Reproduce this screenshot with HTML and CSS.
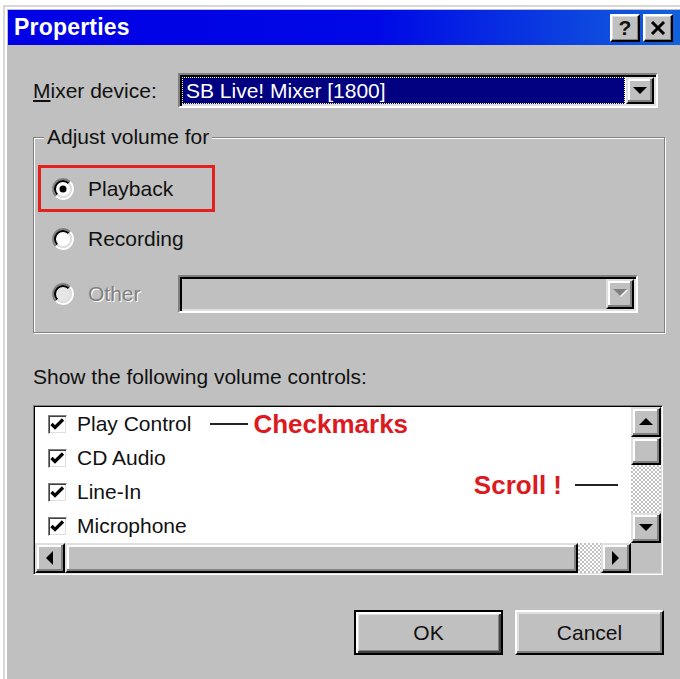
FILE: index.html
```html
<!DOCTYPE html>
<html lang="en">
<head>
<meta charset="utf-8">
<title>Properties</title>
<link rel="stylesheet" href="styles.css">
</head>
<body>
<div class="dialog">
  <div class="titlebar">
    <span class="title">Properties</span>
    <div class="caption-btns">
      <span class="cap-btn">?</span>
      <span class="cap-btn">
        <svg width="16" height="14" viewBox="0 0 16 14"><path d="M2 1 L14 13 M14 1 L2 13" stroke="#000" stroke-width="3" fill="none"/></svg>
      </span>
    </div>
  </div>

  <div class="content">
    <div class="mixer-row">
      <span class="label"><u>M</u>ixer device:</span>
      <div class="combo">
        <div class="combo-value selected">SB Live! Mixer [1800]</div>
        <span class="drop raised">
          <svg width="14" height="8" viewBox="0 0 14 8"><polygon points="0,0 14,0 7,7" fill="#000"/></svg>
        </span>
      </div>
    </div>

    <div class="group">
      <div class="legend">Adjust volume for</div>

      <div class="opt opt-first marked">
        <svg class="radio" viewBox="0 0 22 22">
          <circle cx="11" cy="11" r="8" fill="#fff"/>
          <path d="M3.93 18.07A10 10 0 0 1 18.07 3.93" stroke="#808080" stroke-width="2" fill="none"/>
          <path d="M18.07 3.93A10 10 0 0 1 3.93 18.07" stroke="#fff" stroke-width="2" fill="none"/>
          <path d="M5.34 16.66A8 8 0 0 1 16.66 5.34" stroke="#000" stroke-width="2" fill="none"/>
          <path d="M16.66 5.34A8 8 0 0 1 5.34 16.66" stroke="#dfdfdf" stroke-width="2" fill="none"/>
          <circle cx="11" cy="11" r="3.5" fill="#000"/>
        </svg>
        <span>Playback</span>
      </div>

      <div class="opt opt-second">
        <svg class="radio" viewBox="0 0 22 22">
          <circle cx="11" cy="11" r="8" fill="#fff"/>
          <path d="M3.93 18.07A10 10 0 0 1 18.07 3.93" stroke="#808080" stroke-width="2" fill="none"/>
          <path d="M18.07 3.93A10 10 0 0 1 3.93 18.07" stroke="#fff" stroke-width="2" fill="none"/>
          <path d="M5.34 16.66A8 8 0 0 1 16.66 5.34" stroke="#000" stroke-width="2" fill="none"/>
          <path d="M16.66 5.34A8 8 0 0 1 5.34 16.66" stroke="#dfdfdf" stroke-width="2" fill="none"/>
        </svg>
        <span>Recording</span>
      </div>

      <div class="opt opt-third disabled">
        <svg class="radio" viewBox="0 0 22 22">
          <circle cx="11" cy="11" r="8" fill="#e6e6e6"/>
          <path d="M3.93 18.07A10 10 0 0 1 18.07 3.93" stroke="#808080" stroke-width="2" fill="none"/>
          <path d="M18.07 3.93A10 10 0 0 1 3.93 18.07" stroke="#fff" stroke-width="2" fill="none"/>
          <path d="M5.34 16.66A8 8 0 0 1 16.66 5.34" stroke="#000" stroke-width="2" fill="none"/>
          <path d="M16.66 5.34A8 8 0 0 1 5.34 16.66" stroke="#dfdfdf" stroke-width="2" fill="none"/>
        </svg>
        <span class="other-label">Other</span>
        <div class="combo combo-off">
          <div class="combo-value"></div>
          <span class="drop raised">
            <svg width="15" height="9" viewBox="0 0 15 9">
              <polygon points="1,1 15,1 8,8" fill="#fff"/>
              <polygon points="0,0 14,0 7,7" fill="#808080"/>
            </svg>
          </span>
        </div>
      </div>
    </div>

    <div class="show-label">Show the following volume controls:</div>

    <div class="listbox">
      <ul class="items">
        <li class="item">
          <span class="chk"><svg width="15" height="15" viewBox="0 0 15 15"><polyline points="1.5,7 5,10.5 13,2.5" stroke="#000" stroke-width="3.2" fill="none"/></svg></span>
          <span>Play Control</span>
          <span class="note-line"></span>
          <span class="note">Checkmarks</span>
        </li>
        <li class="item">
          <span class="chk"><svg width="15" height="15" viewBox="0 0 15 15"><polyline points="1.5,7 5,10.5 13,2.5" stroke="#000" stroke-width="3.2" fill="none"/></svg></span>
          <span>CD Audio</span>
        </li>
        <li class="item">
          <span class="chk"><svg width="15" height="15" viewBox="0 0 15 15"><polyline points="1.5,7 5,10.5 13,2.5" stroke="#000" stroke-width="3.2" fill="none"/></svg></span>
          <span>Line-In</span>
          <span class="scroll-note"><span class="note">Scroll !</span><span class="note-line note-line-r"></span></span>
        </li>
        <li class="item">
          <span class="chk"><svg width="15" height="15" viewBox="0 0 15 15"><polyline points="1.5,7 5,10.5 13,2.5" stroke="#000" stroke-width="3.2" fill="none"/></svg></span>
          <span>Microphone</span>
        </li>
      </ul>

      <div class="vscroll">
        <span class="sbtn raised"><svg width="14" height="8" viewBox="0 0 14 8"><polygon points="7,0 14,7 0,7" fill="#000"/></svg></span>
        <span class="thumb-v raised"></span>
        <span class="track"></span>
        <span class="sbtn raised"><svg width="14" height="8" viewBox="0 0 14 8"><polygon points="0,0 14,0 7,7" fill="#000"/></svg></span>
      </div>

      <div class="hscroll">
        <span class="sbtn raised"><svg width="8" height="14" viewBox="0 0 8 14"><polygon points="7,0 7,14 0,7" fill="#000"/></svg></span>
        <span class="thumb-h raised"></span>
        <span class="track"></span>
        <span class="sbtn raised"><svg width="8" height="14" viewBox="0 0 8 14"><polygon points="0,0 7,7 0,14" fill="#000"/></svg></span>
      </div>

      <div class="corner"></div>
    </div>

    <div class="actions">
      <button class="btn btn-default" type="button">OK</button>
      <button class="btn" type="button">Cancel</button>
    </div>
  </div>
</div>
</body>
</html>
```

FILE: styles.css
```css
* {
  box-sizing: border-box;
}

html,
body {
  margin: 0;
  height: 100%;
  overflow: hidden;
  background: #fff;
}

body {
  font-family: "Liberation Sans", Arial, sans-serif;
  font-size: 21px;
  color: #111;
}

/* window frame */
.dialog {
  margin: 5px 0 0 3px;
  width: 677px;
  height: 690px;
  background: #c0c0c0;
  border-left: 2px solid #d8d8d8;
  border-top: 2px solid #d8d8d8;
  box-shadow: inset 2px 2px #fff;
  padding: 3px 0 0 3px;
}

.titlebar {
  height: 35px;
  display: flex;
  align-items: center;
  justify-content: space-between;
  padding: 0 7px 0 6px;
  background: linear-gradient(90deg, #0000e4 0%, #0008e6 55%, #1262dc 100%);
}

.title {
  color: #fff;
  font-weight: bold;
  font-size: 23px;
  letter-spacing: 0.2px;
}

.caption-btns {
  display: flex;
  gap: 3px;
}

.cap-btn {
  width: 30px;
  height: 28px;
  display: flex;
  align-items: center;
  justify-content: center;
  background: #c0c0c0;
  border: 2px solid;
  border-color: #fff #000 #000 #fff;
  box-shadow: inset -1px -1px #808080, inset 1px 1px #dfdfdf;
  font-weight: bold;
  font-size: 21px;
  line-height: 1;
}

/* shared bevels */
.raised {
  background: #c0c0c0;
  border: 2px solid;
  border-color: #dfdfdf #000 #000 #dfdfdf;
  box-shadow: inset -2px -2px #808080, inset 2px 2px #fff;
}

.content {
  padding: 28px 15px 0 25px;
}

/* mixer device row */
.mixer-row {
  display: flex;
  align-items: center;
  height: 35px;
}

.label {
  width: 145px;
}

.combo {
  width: 480px;
  height: 35px;
  display: flex;
  border: 2px solid;
  border-color: #808080 #fff #fff #808080;
  box-shadow: inset 2px 2px #000, inset -2px -2px #dfdfdf;
  padding: 2px;
  background: #fff;
}

.combo-value {
  flex: 1;
  display: flex;
  align-items: center;
  margin-right: 1px;
}

.selected {
  background: #000080;
  color: #fff;
  border: 1px dotted #ffffa8;
  padding-left: 3px;
}

.drop {
  width: 28px;
  flex: none;
  display: flex;
  align-items: center;
  justify-content: center;
}

/* "Adjust volume for" group */
.group {
  margin-top: 29px;
  border: 1px solid #808080;
  box-shadow: 1px 1px 0 #fff, inset 1px 1px 0 #fff;
  padding: 0 0 15px 4px;
}

.legend {
  width: fit-content;
  margin: -13px 0 0 6px;
  padding: 0 3px;
  line-height: 24px;
  background: #c0c0c0;
}

.opt {
  display: flex;
  align-items: center;
  height: 47px;
  border: 3px solid transparent;
  padding-left: 11px;
}

.opt-first {
  margin-top: 16px;
}

.opt-second {
  margin-top: 3px;
}

.opt-third {
  margin-top: 8px;
}

.marked {
  width: 177px;
  border-color: #e3201d;
}

.radio {
  width: 22px;
  height: 22px;
  flex: none;
  margin-right: 14px;
}

.disabled .other-label {
  width: 90px;
  color: #808080;
  text-shadow: 1px 1px 0 #fff;
}

.combo-off {
  width: 460px;
  height: 38px;
  background: #c0c0c0;
}

.show-label {
  margin-top: 32px;
  line-height: 24px;
}

/* list of volume controls */
.listbox {
  margin-top: 16px;
  width: 630px;
  height: 170px;
  border: 1px solid;
  border-color: #808080 #fff #fff #808080;
  box-shadow: inset 1px 1px #000, inset -1px -1px #dfdfdf;
  padding: 1px;
  display: grid;
  grid-template-columns: 1fr 30px;
  grid-template-rows: 1fr 30px;
  background: #fff;
}

.items {
  list-style: none;
  margin: 0;
  padding: 0;
  overflow: hidden;
}

.item {
  height: 34px;
  display: flex;
  align-items: center;
  padding-left: 13px;
}

.chk {
  width: 19px;
  height: 19px;
  flex: none;
  margin-right: 10px;
  display: flex;
  align-items: center;
  justify-content: center;
  background: #fff;
  border: 1px solid;
  border-color: #808080 #fff #fff #808080;
  box-shadow: inset 1px 1px #404040, inset -1px -1px #dfdfdf;
}

.note {
  color: #dc1a1f;
  font-weight: bold;
  font-size: 26px;
  line-height: 20px;
}

.note-line {
  width: 38px;
  height: 2px;
  margin: 0 5px 0 19px;
  background: #222;
}

.scroll-note {
  margin-left: auto;
  margin-right: 13px;
  align-self: flex-start;
  display: flex;
  align-items: center;
  height: 20px;
}

.note-line-r {
  width: 43px;
  margin: 0 0 0 13px;
}

.track {
  flex: 1;
  background-color: #fff;
  background-image: repeating-conic-gradient(#c0c0c0 0 25%, #fff 0 50%);
  background-size: 4px 4px;
}

.vscroll {
  display: flex;
  flex-direction: column;
}

.hscroll {
  display: flex;
}

.sbtn {
  width: 30px;
  height: 30px;
  flex: none;
  display: flex;
  align-items: center;
  justify-content: center;
}

.thumb-v {
  height: 28px;
  flex: none;
}

.thumb-h {
  width: 513px;
  flex: none;
}

.corner {
  background: #c0c0c0;
}

/* dialog buttons */
.actions {
  margin-top: 35px;
  display: flex;
  justify-content: flex-end;
  gap: 12px;
  padding-right: 1px;
}

.btn {
  width: 149px;
  height: 45px;
  font: inherit;
  color: #111;
  padding: 0;
  background: #c0c0c0;
  border: 2px solid;
  border-color: #fff #000 #000 #fff;
  box-shadow: inset -2px -2px #808080, inset 2px 2px #dfdfdf;
}

.btn-default {
  border-color: #000;
  box-shadow: inset 2px 2px #fff, inset -2px -2px #404040, inset 3px 3px #dfdfdf, inset -3px -3px #808080;
}
```
